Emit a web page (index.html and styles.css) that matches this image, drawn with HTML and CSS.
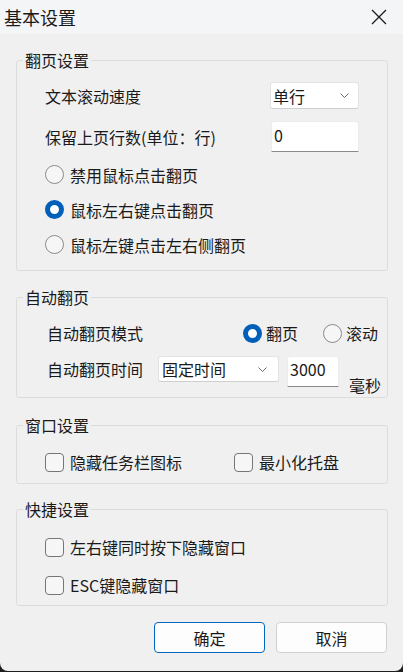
FILE: index.html
```html
<!DOCTYPE html>
<html lang="zh-CN">
<head>
    <meta charset="UTF-8">
    <title>基本设置</title>
    <link rel="stylesheet" href="styles.css">
</head>
<body>
<div class="window">
    <div class="titlebar">
        <span class="title">基本设置</span>
        <svg class="close" width="16" height="16" viewBox="0 0 16 16"><path d="M1 1L15 15M15 1L1 15" stroke="#1a1a1a" stroke-width="1.3" fill="none"/></svg>
    </div>
    <div class="content">
        <fieldset class="group group_page">
            <legend>翻页设置</legend>
            <div class="group_body">
                <div class="row row_speed">
                    <span class="label w225">文本滚动速度</span>
                    <div class="combo combo_speed"><span>单行</span><svg width="9" height="5" viewBox="0 0 9 5"><path d="M0.5 0.5L4.5 4.5L8.5 0.5" stroke="#6b6b6b" stroke-width="1" fill="none"/></svg></div>
                </div>
                <div class="row row_keep">
                    <span class="label w226">保留上页行数(单位：行)</span>
                    <div class="edit edit_keep">0</div>
                </div>
                <div class="opt opt_first"><span class="radio"></span>禁用鼠标点击翻页</div>
                <div class="opt"><span class="radio on"></span>鼠标左右键点击翻页</div>
                <div class="opt"><span class="radio"></span>鼠标左键点击左右侧翻页</div>
            </div>
        </fieldset>

        <fieldset class="group group_auto">
            <legend>自动翻页</legend>
            <div class="group_body">
                <div class="row row_mode">
                    <span class="label w196">自动翻页模式</span>
                    <span class="inline_opt"><span class="radio on"></span>翻页</span>
                    <span class="inline_opt opt_scroll"><span class="radio"></span>滚动</span>
                </div>
                <div class="row row_time">
                    <span class="label w111 time_label">自动翻页时间</span>
                    <div class="combo combo_time"><span>固定时间</span><svg width="9" height="5" viewBox="0 0 9 5"><path d="M0.5 0.5L4.5 4.5L8.5 0.5" stroke="#6b6b6b" stroke-width="1" fill="none"/></svg></div>
                    <div class="edit edit_time">3000</div>
                    <span class="unit">毫秒</span>
                </div>
            </div>
        </fieldset>

        <fieldset class="group group_win">
            <legend>窗口设置</legend>
            <div class="group_body">
                <div class="row check_row">
                    <span class="check_item w189"><span class="check"></span>隐藏任务栏图标</span>
                    <span class="check_item"><span class="check"></span>最小化托盘</span>
                </div>
            </div>
        </fieldset>

        <fieldset class="group group_key">
            <legend>快捷设置</legend>
            <div class="group_body">
                <div class="row check_row"><span class="check_item"><span class="check"></span>左右键同时按下隐藏窗口</span></div>
                <div class="row check_row"><span class="check_item"><span class="check"></span>ESC键隐藏窗口</span></div>
            </div>
        </fieldset>

        <div class="buttons">
            <button class="btn btn_ok">确定</button>
            <button class="btn">取消</button>
        </div>
    </div>
</div>
</body>
</html>
```

FILE: styles.css
```css
*{margin: 0;padding: 0;box-sizing: border-box}
body{
    background: #1e1e1e;
    width: 403px;
    height: 672px;
    font-family: "Noto Sans CJK SC", "Microsoft YaHei", sans-serif;
    font-size: 16px;
    line-height: 20px;
    color: #1a1a1a;
}
.window{
    width: 403px;
    height: 671px;
    background: #f0f0f0;
    border-radius: 0 0 8px 8px;
    overflow: hidden;
}
    .titlebar{
        height: 34px;
        background: #f4f5f7;
        display: flex;
        align-items: center;
        justify-content: space-between;
        padding: 0 16px 0 4px;
    }
        .title{
            font-size: 18px;
            line-height: 22px;
        }
        .close{
            display: block;
        }
    .content{
        padding: 16px 15px 0 16px;
    }
        .group{
            border: 1px solid #dcdcdc;
            border-radius: 3px;
            padding: 0;
            min-width: 0;
        }
        .group legend{
            margin-left: 6px;
            padding: 0 2px;
            line-height: 20px;
        }
        .group_page .group_body{
            padding: 0 0 8px 28px;
        }
        .group_auto{
            margin-top: 16px;
        }
        .group_auto .group_body{
            padding: 0 0 2px 30px;
        }
        .group_win{
            margin-top: 17px;
        }
        .group_win .group_body{
            padding: 0 0 11px 28px;
        }
        .group_key{
            margin-top: 15px;
        }
        .group_key .group_body{
            padding: 0 0 10px 28px;
        }

        .row{
            display: flex;
            align-items: center;
        }
        .label{
            flex: none;
        }
        .w225{width: 225px}
        .w226{width: 226px}
        .w196{width: 196px}
        .w111{width: 111px}
        .w189{width: 189px}

        .row_speed{margin-top: 12px}
        .row_keep{margin-top: 12px}

        .combo{
            height: 27px;
            background: #fff;
            border: 1px solid #e3e3e3;
            border-bottom-color: #cfcfcf;
            border-radius: 3px;
            display: flex;
            align-items: center;
            justify-content: space-between;
            padding: 0 9px 0 2px;
        }
        .combo svg{display: block}
        .combo_speed{width: 89px}
        .combo_time{
            width: 121px;
            height: 26px;
            padding: 0 11px 0 3px;
        }
        .edit{
            height: 31px;
            background: #fff;
            border: 1px solid #ececec;
            border-bottom: 1px solid #8a8a8a;
            border-radius: 3px 3px 0 0;
            padding: 3px 0 0 2px;
        }
        .edit_keep{width: 88px}
        .edit_time{
            width: 52px;
            margin-left: 8px;
            padding: 2px 0 0 2px;
        }
        .unit{
            align-self: flex-start;
            margin: 19px 0 0 10px;
        }

        .opt{
            height: 35px;
            display: flex;
            align-items: center;
        }
        .opt_first{margin-top: 5px}
        .radio{
            flex: none;
            width: 19px;
            height: 19px;
            border-radius: 50%;
            border: 1px solid #8a8a8a;
            background: #f6f6f6;
            margin-right: 6px;
        }
        .radio.on{
            border: 5.5px solid #005fb8;
            background: #fff;
        }
        .row_mode{
            margin-top: 8px;
            height: 36px;
        }
        .inline_opt{
            display: flex;
            align-items: center;
        }
        .inline_opt .radio{margin-right: 4px}
        .opt_scroll{margin-left: 25px}
        .row_time{
            margin-top: 5px;
            align-items: flex-start;
        }
        .time_label{margin-top: 3px}

        .check_row{
            height: 20px;
            margin-top: 17px;
        }
        .group_key .check_row{margin-top: 18px}
        .check_item{
            display: flex;
            align-items: center;
        }
        .check{
            flex: none;
            width: 19px;
            height: 19px;
            border: 1px solid #767676;
            border-radius: 4px;
            background: #f6f6f6;
            margin-right: 6px;
        }

        .buttons{
            display: flex;
            justify-content: flex-end;
            gap: 11px;
            margin: 16px 1px 0 0;
        }
        .btn{
            width: 111px;
            height: 31px;
            border: 1px solid #d0d0d0;
            border-radius: 4px;
            background: #fdfdfd;
            font-family: inherit;
            font-size: 16px;
            line-height: 20px;
            color: #1a1a1a;
        }
        .btn_ok{
            border-color: #0067c0;
        }
```
